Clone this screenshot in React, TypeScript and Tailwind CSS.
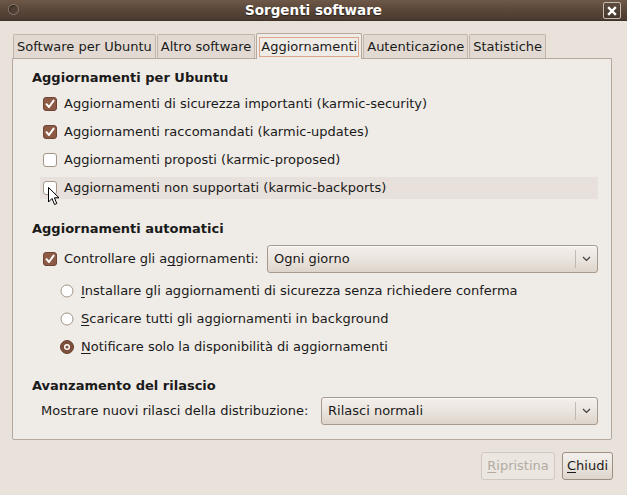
import React from "react";

const font = { fontFamily: '"DejaVu Sans", "Liberation Sans", sans-serif' };

function Check({ checked }: { checked: boolean }) {
  if (checked) {
    return (
      <svg width="14" height="14" viewBox="0 0 14 14" className="shrink-0">
        <rect x="0.5" y="0.5" width="13" height="13" rx="2.5" fill="#8d5b45" stroke="#6e4433" />
        <path d="M3.5 7.2 L6 10 L10.6 3.6" fill="none" stroke="#ffffff" strokeWidth="2" strokeLinecap="round" strokeLinejoin="round" />
      </svg>
    );
  }
  return (
    <svg width="14" height="14" viewBox="0 0 14 14" className="shrink-0">
      <rect x="0.5" y="0.5" width="13" height="13" rx="2.5" fill="#ffffff" stroke="#a39587" />
    </svg>
  );
}

function Radio({ checked }: { checked: boolean }) {
  return (
    <svg width="14" height="14" viewBox="0 0 14 14" className="shrink-0">
      {checked ? (
        <>
          <circle cx="7" cy="7" r="6.5" fill="#7d4e3b" stroke="#6a412f" />
          <circle cx="7" cy="7" r="3" fill="#ffffff" />
          <circle cx="7" cy="7" r="1.6" fill="#7d4e3b" />
        </>
      ) : (
        <circle cx="7" cy="7" r="6" fill="#ffffff" stroke="#a39587" />
      )}
    </svg>
  );
}

function Combo({ label, width }: { label: string; width: string }) {
  return (
    <div
      className={`${width} h-[28px] flex items-center rounded-[3px] border border-[#a89a8c] bg-gradient-to-b from-[#f3efeb] via-[#ebe5df] to-[#ddd5cc] shadow-[inset_0_1px_0_#fbfaf8]`}
    >
      <div className="flex-1 pl-[6px] text-[#1a1a1a]">{label}</div>
      <div className="w-px h-[18px] bg-[#c4b9ae]" />
      <div className="w-[21px] flex justify-center">
        <svg width="9" height="6" viewBox="0 0 9 6">
          <path d="M1 1 L4.5 4.5 L8 1" fill="none" stroke="#3c3c3c" strokeWidth="1.2" />
        </svg>
      </div>
    </div>
  );
}

function Tab({ label, active }: { label: string; active?: boolean }) {
  if (active) {
    return (
      <div className="h-[26px] px-[2px] pt-[3px] flex items-start bg-[#efebe6] border border-b-0 border-[#b4a89c] rounded-t-[2px] -mb-px relative z-10">
        <div className="px-[1px] border border-[#dca58c] h-[20px] leading-[18px] text-[#1a1a1a] text-[13px]">{label}</div>
      </div>
    );
  }
  return (
    <div className="h-[24px] px-[3px] pt-[3px] bg-[#e2dad2] border border-b-0 border-[#c2b6aa] rounded-t-[2px] text-[13px] leading-[18px] text-[#1a1a1a]">
      {label}
    </div>
  );
}

export default function App() {
  return (
    <div style={font} className="w-[627px] h-[495px] bg-[#e8e2db] flex flex-col text-[13px] text-[#1a1a1a] overflow-hidden">
      {/* Title bar */}
      <div className="h-[21px] shrink-0 bg-gradient-to-b from-[#6e5848] via-[#5a4739] to-[#4a3a2f] flex items-center relative border-b border-[#3f3128]">
        <div className="absolute left-[8px] top-[4px] w-[11px] h-[11px] rounded-full bg-[#4f3f34] border border-[#8c7c70] shadow-[inset_1px_1px_1px_#2e241e]" />
        <div className="flex-1 text-center font-bold text-white text-[13.5px] [text-shadow:0_1px_1px_#2a1f18]">Sorgenti software</div>
        <div className="absolute right-[6px] top-[2px] w-[18px] h-[17px] rounded-[2px] border border-[#c7bcb2] bg-gradient-to-b from-[#5f4c3f] to-[#45362c] flex items-center justify-center">
          <svg width="10" height="10" viewBox="0 0 10 10">
            <path d="M2 2 L8 8 M8 2 L2 8" stroke="#ffffff" strokeWidth="2.4" strokeLinecap="square" />
          </svg>
        </div>
      </div>

      <div className="flex flex-col pl-[12px] pr-[15px] pt-[12px]">
        {/* Tabs */}
        <div className="flex items-end gap-[1px] h-[25px] pl-[1px]">
          <Tab label="Software per Ubuntu" />
          <Tab label="Altro software" />
          <Tab label="Aggiornamenti" active />
          <Tab label="Autenticazione" />
          <Tab label="Statistiche" />
        </div>

        {/* Panel */}
        <div className="h-[382px] bg-[#efebe6] border border-[#b4a89c] rounded-b-[2px] flex flex-col pt-[10px] pl-[19px] pr-[13px]">
          <div className="h-[18px] leading-[18px] font-bold">Aggiornamenti per Ubuntu</div>
          <div className="flex flex-col gap-[6px] mt-[6px] pl-[8px]">
            <div className="h-[22px] flex items-center gap-[7px] pl-[3px]">
              <Check checked />
              <span>Aggiornamenti di sicurezza importanti (karmic-security)</span>
            </div>
            <div className="h-[22px] flex items-center gap-[7px] pl-[3px]">
              <Check checked />
              <span>Aggiornamenti raccomandati (karmic-updates)</span>
            </div>
            <div className="h-[22px] flex items-center gap-[7px] pl-[3px]">
              <Check checked={false} />
              <span>Aggiornamenti proposti (karmic-proposed)</span>
            </div>
            <div className="h-[22px] flex items-center gap-[7px] pl-[3px] bg-[#e8e1db] relative">
              <Check checked={false} />
              <span>Aggiornamenti non supportati (karmic-backports)</span>
              <svg width="12" height="19" viewBox="0 0 12 19" className="absolute left-[8px] top-[10px]">
                <path d="M0.5 0.5 L0.5 15 L4 11.5 L6.5 17.5 L8.8 16.5 L6.4 10.8 L11 10.8 Z" fill="#ffffff" stroke="#000000" strokeWidth="1" strokeLinejoin="round" />
              </svg>
            </div>
          </div>

          <div className="h-[18px] leading-[18px] font-bold mt-[21px]">Aggiornamenti automatici</div>
          <div className="flex items-center mt-[7px] pl-[11px] h-[28px]">
            <Check checked />
            <span className="ml-[7px]">
              Controllare gli a<span className="underline underline-offset-2">g</span>giornamenti:
            </span>
            <div className="ml-auto">
              <Combo label="Ogni giorno" width="w-[331px]" />
            </div>
          </div>
          <div className="flex flex-col gap-[6px] mt-[7px] pl-[28px]">
            <div className="h-[22px] flex items-center gap-[7px]">
              <Radio checked={false} />
              <span>
                <span className="underline underline-offset-2">I</span>nstallare gli aggiornamenti di sicurezza senza richiedere conferma
              </span>
            </div>
            <div className="h-[22px] flex items-center gap-[7px]">
              <Radio checked={false} />
              <span>
                <span className="underline underline-offset-2">S</span>caricare tutti gli aggiornamenti in background
              </span>
            </div>
            <div className="h-[22px] flex items-center gap-[7px]">
              <Radio checked />
              <span>
                <span className="underline underline-offset-2">N</span>otificare solo la disponibilità di aggiornamenti
              </span>
            </div>
          </div>

          <div className="h-[18px] leading-[18px] font-bold mt-[19px]">Avanzamento del rilascio</div>
          <div className="flex items-center mt-[2px] pl-[9px] h-[28px]">
            <span>Mostrare nuovi rilasci della distribuzione:</span>
            <div className="ml-auto">
              <Combo label="Rilasci normali" width="w-[277px]" />
            </div>
          </div>
        </div>

        {/* Buttons */}
        <div className="flex justify-end gap-[7px] mt-[12px] mr-[-1px]">
          <div className="h-[28px] w-[74px] rounded-[3px] border border-[#d2c8be] bg-[#ebe6e0] flex items-center justify-center text-[#b3aba2]">
            <span>
              <span className="underline underline-offset-2">R</span>ipristina
            </span>
          </div>
          <div className="h-[28px] w-[51px] rounded-[3px] border border-[#9d8f82] bg-gradient-to-b from-[#f3efeb] via-[#ebe5df] to-[#ddd5cc] flex items-center justify-center">
            <span>
              <span className="underline underline-offset-2">C</span>hiudi
            </span>
          </div>
        </div>
      </div>
    </div>
  );
}
